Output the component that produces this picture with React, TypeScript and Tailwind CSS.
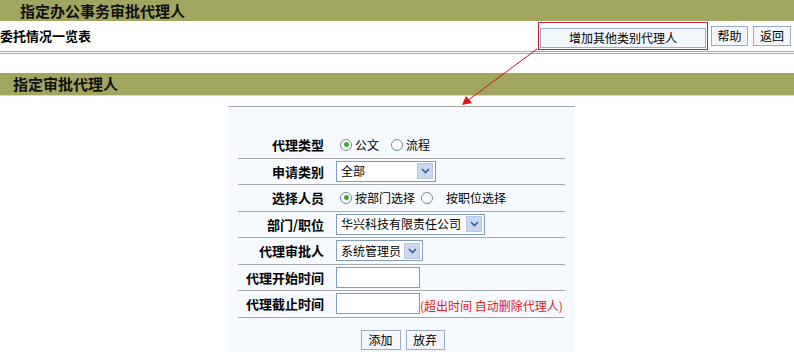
const font = { fontFamily: '"Noto Sans CJK SC", "Noto Sans", sans-serif' };

function Arrow() {
  return (
    <span className="flex h-[16px] w-[16px] items-center justify-center border border-[#b8c8e8] bg-[#c9d8f2]">
      <svg width="9" height="6" viewBox="0 0 9 6">
        <path d="M1 1 L4.5 4.5 L8 1" fill="none" stroke="#3a5a9a" strokeWidth="1.6" />
      </svg>
    </span>
  );
}

function Select({ text, width }: { text: string; width: number }) {
  return (
    <div
      className="flex h-[21px] items-center justify-between border border-[#7f9db9] bg-white pl-[4px] pr-[2px] text-[12px] text-black"
      style={{ width }}
    >
      <span>{text}</span>
      <Arrow />
    </div>
  );
}

function Radio({ on }: { on?: boolean }) {
  return (
    <span className="mr-[3px] flex h-[12px] w-[12px] items-center justify-center rounded-full border border-[#7a8a99] bg-white">
      {on && <span className="h-[5px] w-[5px] rounded-full bg-[#3aa83a]" />}
    </span>
  );
}

function Row({ label, children }: { label: string; children: React.ReactNode }) {
  return (
    <div className="flex h-[26.5px] items-center border-b border-[#a9a9a9]">
      <div className="w-[86px] whitespace-nowrap text-right text-[13px] font-bold text-black">{label}</div>
      <div className="ml-[12px] flex items-center text-[12px] text-black">{children}</div>
    </div>
  );
}

function Btn({ children, w }: { children: React.ReactNode; w: number }) {
  return (
    <button
      type="button"
      className="h-[20px] border border-[#9aabc4] bg-[#f3f6fa] text-[12px] leading-[18px] text-black"
      style={{ width: w }}
    >
      {children}
    </button>
  );
}

export default function App() {
  return (
    <div className="relative h-[352px] w-[794px] overflow-hidden bg-white" style={font}>
      <div className="h-[21px] bg-[#a0a660] pl-[20px] text-[15px] font-bold leading-[21px] text-[#111]">
        指定办公事务审批代理人
      </div>
      <div className="flex h-[30px] items-center justify-between pr-[3px]">
        <div className="text-[13px] font-bold text-black">委托情况一览表</div>
        <div className="flex items-center gap-[5px]">
          <div className="mr-[-2px] border border-[#c0203a] p-px">
            <Btn w={166}>增加其他类别代理人</Btn>
          </div>
          <Btn w={37}>帮助</Btn>
          <Btn w={38}>返回</Btn>
        </div>
      </div>
      <div className="h-[3px] border-t border-b border-[#a8a8a8]" />
      <div className="h-[19px]" />
      <div className="h-[22px] bg-[#a0a660] pl-[13px] text-[15px] font-bold leading-[22px] text-[#111]">
        指定审批代理人
      </div>
      <div className="h-px bg-[#d7dbb2]" />
      <div className="ml-[228px] mt-[10px] w-[347px] border-t border-[#a8a8a8] bg-[#f6f9fd] pt-[25px] pb-[10px]">
        <div className="mx-[10px]">
          <Row label="代理类型">
            <span className="ml-[4px]" />
            <Radio on />
            <span className="mr-[12px]">公文</span>
            <Radio />
            <span>流程</span>
          </Row>
          <Row label="申请类别">
            <Select text="全部" width={100} />
          </Row>
          <Row label="选择人员">
            <span className="ml-[4px]" />
            <Radio on />
            <span className="mr-[6px]">按部门选择</span>
            <Radio />
            <span className="ml-[10px]">按职位选择</span>
          </Row>
          <Row label="部门/职位">
            <Select text="华兴科技有限责任公司" width={149} />
          </Row>
          <Row label="代理审批人">
            <Select text="系统管理员" width={87} />
          </Row>
          <Row label="代理开始时间">
            <div className="h-[21px] w-[84px] border border-[#7f9db9] bg-white" />
          </Row>
          <Row label="代理截止时间">
            <div className="h-[21px] w-[84px] border border-[#7f9db9] bg-white" />
            <span className="mt-[4px] text-[12px] text-[#e0201f]">(超出时间 自动删除代理人)</span>
          </Row>
          <div className="flex justify-center gap-[5px] pt-[12px] pl-[2px]">
            <Btn w={40}>添加</Btn>
            <Btn w={39}>放弃</Btn>
          </div>
        </div>
      </div>
      <svg className="pointer-events-none absolute left-0 top-0" width="794" height="352">
        <line x1="537" y1="49" x2="467" y2="101" stroke="#d01020" strokeWidth="1" />
        <polygon points="462,105 466,96 472,103" fill="#e01010" />
      </svg>
    </div>
  );
}
